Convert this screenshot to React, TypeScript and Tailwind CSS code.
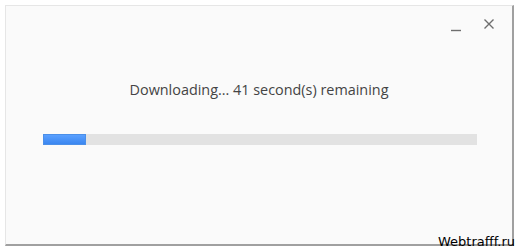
import React from "react";

const App = () => {
  return (
    <div className="relative w-[520px] h-[252px] bg-white overflow-hidden">
      <div className="ml-[5px] mt-[5px] w-[509px] h-[241px] bg-[#fafafa] border-t border-l border-[#e6e6e6] border-r-2 border-b-2 border-r-[#a0a0a0] border-b-[#a0a0a0] flex flex-col">
        <div className="flex justify-end items-center h-[36px] pr-[17px] gap-[21px]">
          <svg width="12" height="12" viewBox="0 0 12 12" className="mt-[4px]">
            <line x1="1" y1="10.5" x2="11" y2="10.5" stroke="#6e6e6e" strokeWidth="1.4" />
          </svg>
          <svg width="12" height="12" viewBox="0 0 12 12">
            <path d="M1.5 1.5 L10.5 10.5 M10.5 1.5 L1.5 10.5" stroke="#6e6e6e" strokeWidth="1.4" />
          </svg>
        </div>
        <div className="mt-[38px] text-center text-[14.4px] leading-[20px] text-[#444] font-['Open_Sans',sans-serif]">
          Downloading... 41 second(s) remaining
        </div>
        <div className="mt-[34px] ml-[37px] mr-[35px] h-[11px] bg-[#e2e2e2]">
          <div className="h-full w-[43px] bg-gradient-to-b from-[#5aa0ff] to-[#3a86f0] border border-[#4b8fe8]" />
        </div>
      </div>
      <div className="absolute right-[5px] bottom-[2px] text-[13px] leading-[16px] text-black font-['DejaVu_Sans',sans-serif]">
        Webtrafff.ru
      </div>
    </div>
  );
};

export default App;
